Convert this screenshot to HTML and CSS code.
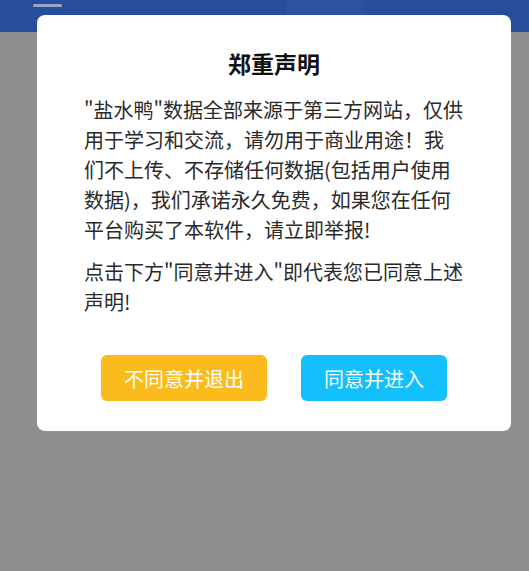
FILE: index.html
```html
<!DOCTYPE html>
<html lang="zh-CN">
<head>
    <meta charset="UTF-8">
    <title>郑重声明</title>
    <link rel="stylesheet" href="styles.css">
</head>
<body>
    <div class="page">
        <div class="top-bar">
            <div class="menu-line"></div>
            <div class="bar-deco"></div>
        </div>
    </div>

    <div class="overlay">
        <div class="dialog">
            <h2 class="dialog-title">郑重声明</h2>
            <p class="dialog-text">"盐水鸭"数据全部来源于第三方网站，仅供<br>用于学习和交流，请勿用于商业用途！我<br>们不上传、不存储任何数据(包括用户使用<br>数据)，我们承诺永久免费，如果您在任何<br>平台购买了本软件，请立即举报!</p>
            <p class="dialog-text">点击下方"同意并进入"即代表您已同意上述<br>声明!</p>
            <div class="dialog-buttons">
                <button class="btn btn-exit">不同意并退出</button>
                <button class="btn btn-enter">同意并进入</button>
            </div>
        </div>
    </div>
</body>
</html>
```

FILE: styles.css
```css
* {
    margin: 0;
    padding: 0;
    box-sizing: border-box;
}

body {
    font-family: "Noto Sans CJK SC", "Noto Sans", sans-serif;
    background: #8e8e8e;
    width: 529px;
    height: 571px;
    overflow: hidden;
}

.page {
    height: 100%;
}

.top-bar {
    position: relative;
    height: 32px;
    background: #284d9b;
    overflow: hidden;
}

.menu-line {
    position: absolute;
    top: 4px;
    left: 33px;
    width: 29px;
    height: 3px;
    border-radius: 2px;
    background: #98a6c6;
}

.bar-deco {
    position: absolute;
    top: -20px;
    left: 285px;
    width: 80px;
    height: 60px;
    border-radius: 50%;
    background: #2c52a0;
}

.overlay {
    position: absolute;
    top: 0;
    left: 0;
    width: 529px;
    height: 571px;
    padding: 15px 18px 0 37px;
}

.dialog {
    width: 474px;
    background: #fff;
    border-radius: 8px;
    padding: 32px 47px 30px;
}

.dialog-title {
    font-size: 23px;
    font-weight: bold;
    line-height: 32px;
    text-align: center;
    color: #111;
    margin-bottom: 16px;
}

.dialog-text {
    font-size: 20px;
    line-height: 30px;
    color: #2a2a2a;
    white-space: nowrap;
}

.dialog-text + .dialog-text {
    margin-top: 12px;
}

.dialog-buttons {
    display: flex;
    justify-content: center;
    gap: 34px;
    margin-top: 38px;
}

.btn {
    height: 46px;
    padding: 0 23px;
    border: none;
    border-radius: 6px;
    font-family: inherit;
    font-size: 20px;
    color: #fff;
}

.btn-exit {
    background: #fbbb1c;
}

.btn-enter {
    background: #14c0fb;
}
```
